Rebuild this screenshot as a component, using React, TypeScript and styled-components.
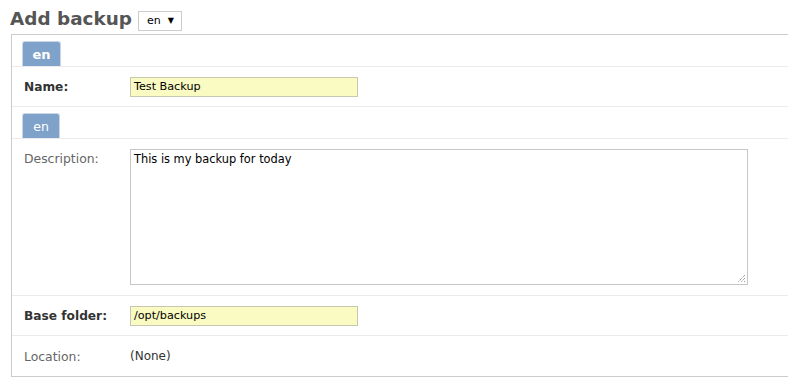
import React from "react";
import styled, { createGlobalStyle } from "styled-components";

const Global = createGlobalStyle`
  html, body { margin: 0; padding: 0; background: #fff; }
  body { font-family: "DejaVu Sans", Verdana, sans-serif; font-size: 11px; color: #333; }
  * { box-sizing: border-box; }
`;

const Page = styled.div`
  padding: 4px 0 0 10px;
  width: 788px;
  overflow: hidden;
`;

const Header = styled.div`
  display: flex;
  align-items: center;
  gap: 6px;
  height: 30px;
`;

const Title = styled.h1`
  margin: 0;
  font-size: 18.4px;
  font-weight: bold;
  color: #555;
  line-height: 24px;
`;

const LangSelect = styled.div`
  display: flex;
  align-items: center;
  gap: 7px;
  height: 20px;
  width: 44px;
  padding: 0 0 0 8px;
  border: 1px solid #ccc;
  background: #fff;
  font-size: 11px;
  color: #000;
  margin-top: 3px;
`;

const Arrow = styled.span`
  font-size: 8px;
`;

const Panel = styled.div`
  margin-left: 1px;
  border: 1px solid #ccc;
  border-right: none;
  width: 800px;
`;

const TabBar = styled.div<{ $top: number }>`
  display: flex;
  padding: ${(p) => p.$top}px 0 0 10px;
  border-bottom: 1px solid #ebebeb;
`;

const Tab = styled.div<{ $bold?: boolean; $w: number }>`
  width: ${(p) => p.$w}px;
  height: 25px;
  background: #7fa2cb;
  border: 1px solid #c9d6e6;
  border-bottom: none;
  border-radius: 3px 3px 0 0;
  color: #fff;
  font-size: ${(p) => (p.$bold ? "13px" : "12.5px")};
  font-weight: ${(p) => (p.$bold ? "bold" : "normal")};
  display: flex;
  align-items: center;
  justify-content: center;
`;

const Row = styled.div<{ $h: number; $last?: boolean }>`
  display: grid;
  grid-template-columns: 106px 1fr;
  align-items: ${(p) => (p.$h > 60 ? "start" : "center")};
  height: ${(p) => p.$h}px;
  padding: ${(p) => (p.$h > 60 ? "10px" : "0")} 0 0 12px;
  border-bottom: ${(p) => (p.$last ? "none" : "1px solid #ebebeb")};
`;

const Label = styled.div<{ $strong?: boolean }>`
  font-size: ${(p) => (p.$strong ? "12.2px" : "12.4px")};
  font-weight: ${(p) => (p.$strong ? "bold" : "normal")};
  color: ${(p) => (p.$strong ? "#333" : "#666")};
`;

const TopLabel = styled(Label)`
  padding-top: 2px;
`;

const TextInput = styled.div`
  width: 228px;
  height: 20px;
  background: #f9fbc2;
  border: 1px solid #c8c8b0;
  padding: 0 0 0 3px;
  font-size: 11.2px;
  color: #000;
  display: flex;
  align-items: center;
`;

const TextArea = styled.div`
  position: relative;
  width: 618px;
  height: 136px;
  border: 1px solid #c6c6c6;
  background: #fff;
  padding: 2px 3px;
  font-size: 11.4px;
  line-height: 14px;
  color: #000;
`;

const Grip = styled.svg`
  position: absolute;
  right: 1px;
  bottom: 1px;
`;

const Value = styled.div`
  font-size: 12px;
  color: #333;
`;

export default function App() {
  return (
    <>
      <Global />
      <Page>
        <Header>
          <Title>Add backup</Title>
          <LangSelect>
            en <Arrow>▼</Arrow>
          </LangSelect>
        </Header>
        <Panel>
          <TabBar $top={6}>
            <Tab $bold $w={39}>en</Tab>
          </TabBar>
          <Row $h={40}>
            <Label $strong>Name:</Label>
            <TextInput>Test Backup</TextInput>
          </Row>
          <TabBar $top={6}>
            <Tab $w={38}>en</Tab>
          </TabBar>
          <Row $h={157}>
            <TopLabel>Description:</TopLabel>
            <TextArea>
              This is my backup for today
              <Grip width="9" height="9" viewBox="0 0 9 9">
                <path d="M8 1L1 8M8 4L4 8M8 7L7 8" stroke="#777" strokeWidth="1" strokeDasharray="1 1" />
              </Grip>
            </TextArea>
          </Row>
          <Row $h={40}>
            <Label $strong>Base folder:</Label>
            <TextInput>/opt/backups</TextInput>
          </Row>
          <Row $h={40} $last>
            <Label>Location:</Label>
            <Value>(None)</Value>
          </Row>
        </Panel>
      </Page>
    </>
  );
}
